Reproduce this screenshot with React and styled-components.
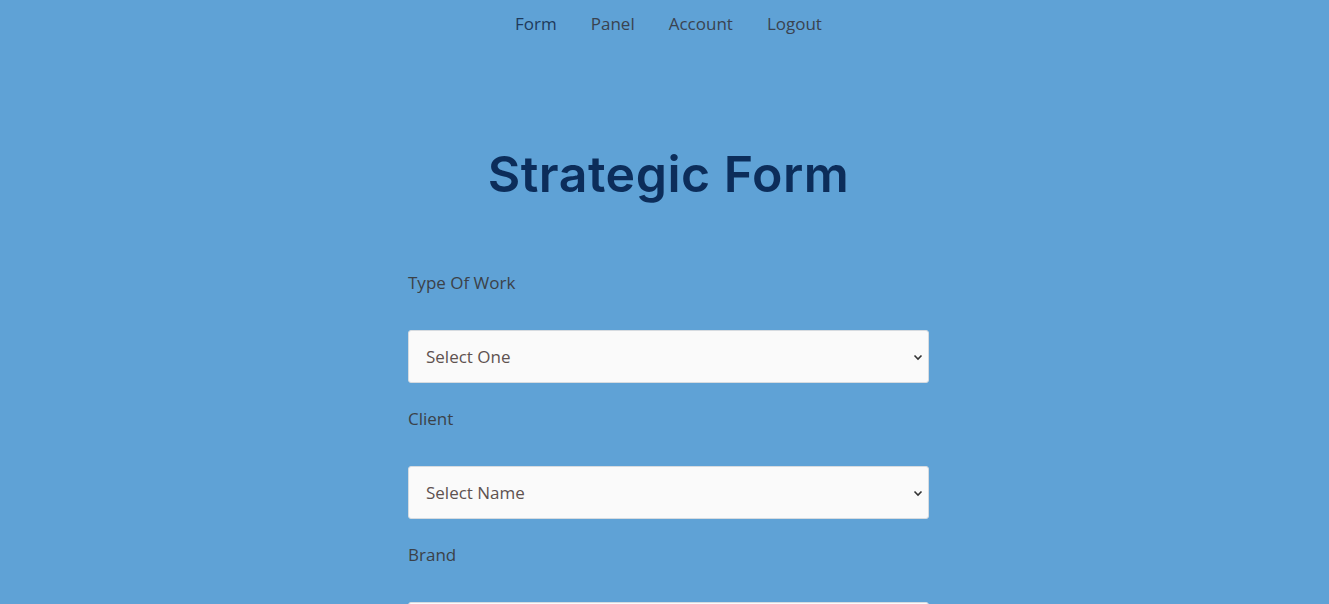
import React from "react";
import styled, { createGlobalStyle } from "styled-components";

const Global = createGlobalStyle`
  html, body { margin: 0; padding: 0; background: #5fa2d6; }
  body { font-family: "Open Sans", "Noto Sans", sans-serif; }
`;

const Page = styled.div`
  min-height: 604px;
  background: #5fa2d6;
  padding-left: 8px;
  box-sizing: border-box;
  display: flex;
  flex-direction: column;
  align-items: center;
`;

const Nav = styled.nav`
  display: flex;
  gap: 34px;
  padding-top: 12px;
`;

const NavLink = styled.a`
  font-size: 17px;
  line-height: 24px;
  color: ${(p) => (p.$active ? "#1e3a5c" : "#3a4350")};
  text-decoration: none;
  cursor: pointer;
`;

const Title = styled.h1`
  margin: 106px 0 0;
  font-family: "Inter", "Open Sans", sans-serif;
  font-weight: 600;
  font-size: 50px;
  line-height: 64px;
  color: #0c2d5a;
  letter-spacing: 0.5px;
`;

const Form = styled.form`
  width: 521px;
  margin-top: 65px;
  display: flex;
  flex-direction: column;
`;

const Field = styled.div`
  display: flex;
  flex-direction: column;
  margin-bottom: 24px;
`;

const Label = styled.label`
  font-size: 17px;
  line-height: 24px;
  color: #3b4148;
  margin-bottom: 35px;
`;

const SelectWrap = styled.div`
  position: relative;
  height: 53px;
`;

const Select = styled.select`
  appearance: none;
  -webkit-appearance: none;
  width: 100%;
  height: 53px;
  box-sizing: border-box;
  border: 1px solid #d6dbe0;
  border-radius: 3px;
  background: #fafafa;
  padding: 0 40px 0 17px;
  font-family: "Open Sans", sans-serif;
  font-size: 17px;
  color: #5e5250;
  outline: none;
`;

const Chevron = styled.svg`
  position: absolute;
  right: 6px;
  top: 50%;
  transform: translateY(-50%);
  pointer-events: none;
`;

const fields = [
  { label: "Type Of Work", placeholder: "Select One" },
  { label: "Client", placeholder: "Select Name" },
  { label: "Brand", placeholder: "Select Brand" },
];

export default function App() {
  return (
    <>
      <Global />
      <Page>
        <Nav>
          <NavLink $active>Form</NavLink>
          <NavLink>Panel</NavLink>
          <NavLink>Account</NavLink>
          <NavLink>Logout</NavLink>
        </Nav>
        <Title>Strategic Form</Title>
        <Form>
          {fields.map((f) => (
            <Field key={f.label}>
              <Label>{f.label}</Label>
              <SelectWrap>
                <Select defaultValue="">
                  <option value="">{f.placeholder}</option>
                </Select>
                <Chevron width="10" height="8" viewBox="0 0 10 8">
                  <path d="M1.5 2.5 L5 6 L8.5 2.5" fill="none" stroke="#333" strokeWidth="1.6" />
                </Chevron>
              </SelectWrap>
            </Field>
          ))}
        </Form>
      </Page>
    </>
  );
}
